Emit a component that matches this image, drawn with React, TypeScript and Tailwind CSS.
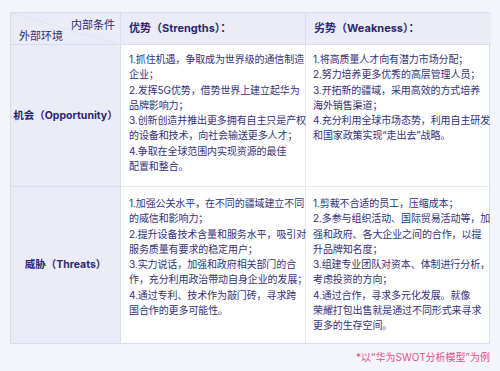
import React from "react";

const font = { fontFamily: '"Inter", "Noto Sans CJK SC", sans-serif' };

const s1 = [
  "1.抓住机遇，争取成为世界级的通信制造",
  "企业；",
  "2.发挥5G优势，借势世界上建立起华为",
  "品牌影响力；",
  "3.创新创造并推出更多拥有自主只是产权",
  "的设备和技术，向社会输送更多人才；",
  "4.争取在全球范围内实现资源的最佳",
  "配置和整合。",
];
const w1 = [
  "1.将高质量人才向有潜力市场分配；",
  "2.努力培养更多优秀的高层管理人员；",
  "3.开拓新的疆域，采用高效的方式培养",
  "海外销售渠道；",
  "4.充分利用全球市场态势，利用自主研发",
  "和国家政策实现“走出去”战略。",
];
const s2 = [
  "1.加强公关水平，在不同的疆域建立不同",
  "的威信和影响力；",
  "2.提升设备技术含量和服务水平，吸引对",
  "服务质量有要求的稳定用户；",
  "3.实力说话，加强和政府相关部门的合",
  "作，充分利用政治带动自身企业的发展；",
  "4.通过专利、技术作为敲门砖，寻求跨",
  "国合作的更多可能性。",
];
const w2 = [
  "1.剪裁不合适的员工，压缩成本；",
  "2.多参与组织活动、国际贸易活动等，加",
  "强和政府、各大企业之间的合作，以提",
  "升品牌知名度；",
  "3.组建专业团队对资本、体制进行分析，",
  "考虑投资的方向；",
  "4.通过合作，寻求多元化发展。就像",
  "荣耀打包出售就是通过不同形式来寻求",
  "更多的生存空间。",
];

function Lines({ lines }: { lines: string[] }) {
  return (
    <div className="text-[10px] leading-[15.3px] text-[#34317a] whitespace-nowrap tracking-[-0.1px]">
      {lines.map((l, i) => (
        <div key={i}>{l}</div>
      ))}
    </div>
  );
}

export default function App() {
  return (
    <div className="w-[500px] h-[371px] bg-[#f4f4fb] pt-[12px] px-[10px]" style={font}>
      <div className="w-[480px] border border-[#dcdcef] bg-white grid grid-cols-[110px_185px_185px]">
        {/* header */}
        <div className="relative h-[32px] bg-[#ececf9] border-r border-b border-[#dcdcef]">
          <svg className="absolute inset-0" width="110" height="32">
            <line x1="0" y1="0" x2="110" y2="32" stroke="#e2e2f3" strokeWidth="1" />
          </svg>
          <span className="absolute right-[5px] top-[4px] text-[11px] text-[#2f2c74]">内部条件</span>
          <span className="absolute left-[8px] top-[15px] text-[11px] text-[#2f2c74]">外部环境</span>
        </div>
        <div className="h-[32px] bg-[#ececf9] border-r border-b border-[#dcdcef] flex items-center pl-[8px] text-[11px] font-bold text-[#2b2870]">
          优势（Strengths）：
        </div>
        <div className="h-[32px] bg-[#ececf9] border-b border-[#dcdcef] flex items-center pl-[8px] text-[11px] font-bold text-[#2b2870]">
          劣势（Weakness）：
        </div>

        {/* row 1 */}
        <div className="h-[142px] bg-[#ececf9] border-r border-b border-[#dcdcef] flex items-center justify-center text-[10.5px] font-bold text-[#2b2870]">
          机会（Opportunity）
        </div>
        <div className="h-[142px] border-r border-b border-[#e6e6f3] pl-[8px] pt-[7px]">
          <Lines lines={s1} />
        </div>
        <div className="h-[142px] border-b border-[#e6e6f3] pl-[7px] pt-[7px]">
          <Lines lines={w1} />
        </div>

        {/* row 2 */}
        <div className="h-[156px] bg-[#ececf9] border-r border-[#dcdcef] flex items-center justify-center text-[10.5px] font-bold text-[#2b2870]">
          威胁（Threats）
        </div>
        <div className="h-[156px] border-r border-[#e6e6f3] pl-[8px] pt-[9px]">
          <Lines lines={s2} />
        </div>
        <div className="h-[156px] pl-[7px] pt-[9px]">
          <Lines lines={w2} />
        </div>
      </div>
      <div className="w-[480px] flex justify-end mt-[6px] text-[10px] text-[#e6508a]">
        *以“华为SWOT分析模型”为例
      </div>
    </div>
  );
}
